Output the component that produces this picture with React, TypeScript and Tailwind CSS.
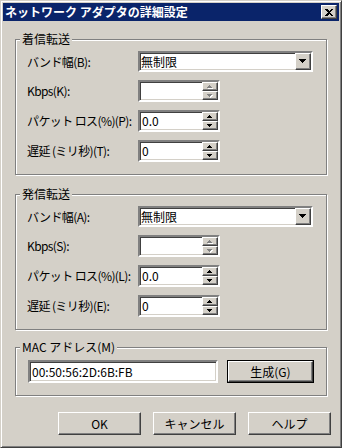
import React from 'react';

const sunken =
  'border-2 border-t-[#808080] border-l-[#808080] border-b-white border-r-white shadow-[inset_1px_1px_0_#404040,inset_-1px_-1px_0_#d4d0c8] bg-white';
const raised =
  'border border-t-white border-l-white border-b-[#404040] border-r-[#404040] shadow-[inset_-1px_-1px_0_#808080] bg-[#d4d0c8]';

const Arrow = ({ up, disabled, w = 5 }: { up?: boolean; disabled?: boolean; w?: number }) => {
  const h = Math.ceil(w / 2);
  const pts = up ? `0,${h} ${w},${h} ${w / 2},0` : `0,0 ${w},0 ${w / 2},${h}`;
  return (
    <svg width={w + 1} height={h + 1} viewBox={`0 0 ${w + 1} ${h + 1}`} shapeRendering="crispEdges">
      {disabled && <polygon points={pts} fill="#fff" transform="translate(1,1)" />}
      <polygon points={pts} fill={disabled ? '#808080' : '#000'} />
    </svg>
  );
};

const Spin = ({ value, disabled }: { value?: string; disabled?: boolean }) => (
  <div className={`${sunken} flex h-[22px] w-[82px]`}>
    <div className="flex-1 pl-[2px] leading-[18px]">{value}</div>
    <div className="flex w-[16px] flex-col">
      <div className={`${raised} flex h-[9px] items-center justify-center`}>
        <Arrow up disabled={disabled} />
      </div>
      <div className={`${raised} flex h-[9px] items-center justify-center`}>
        <Arrow disabled={disabled} />
      </div>
    </div>
  </div>
);

const Combo = ({ value }: { value: string }) => (
  <div className={`${sunken} flex h-[21px] w-[175px]`}>
    <div className="flex-1 pl-[1px] leading-[17px]">{value}</div>
    <div className={`${raised} flex w-[16px] items-center justify-center`}>
      <Arrow w={7} />
    </div>
  </div>
);

const Row = ({ label, children }: { label: string; children: React.ReactNode }) => (
  <div className="flex items-center">
    <div className="w-[111px] whitespace-nowrap tracking-[-0.6px]">{label}</div>
    {children}
  </div>
);

const Group = ({ title, className, children }: { title: string; className?: string; children: React.ReactNode }) => (
  <div className={`mx-[12px] flex flex-col border border-[#808080] shadow-[inset_1px_1px_0_#fff,1px_1px_0_#fff] ${className ?? ''}`}>
    <div className="-mt-[8px] ml-[4px] h-[14px] self-start bg-[#d4d0c8] px-[2px] leading-[14px]">{title}</div>
    {children}
  </div>
);

const Button = ({ label, def, className }: { label: string; def?: boolean; className?: string }) =>
  def ? (
    <div className={`border border-black ${className ?? ''}`}>
      <div className={`${raised} flex h-full items-center justify-center`}>{label}</div>
    </div>
  ) : (
    <div className={`${raised} flex items-center justify-center ${className ?? ''}`}>{label}</div>
  );

const Transfer = ({ title, keys, className }: { title: string; keys: string[]; className?: string }) => (
  <Group title={title} className={className}>
    <div className="mt-[5px] flex flex-col gap-[8px] pb-[12px] pl-[11px]">
      <Row label={`バンド幅(${keys[0]}):`}>
        <Combo value="無制限" />
      </Row>
      <Row label={`Kbps(${keys[1]}):`}>
        <Spin disabled />
      </Row>
      <Row label={`パケット ロス(%)(${keys[2]}):`}>
        <Spin value="0.0" />
      </Row>
      <Row label={`遅延 (ミリ秒)(${keys[3]}):`}>
        <Spin value="0" />
      </Row>
    </div>
  </Group>
);

export default function App() {
  return (
    <div className="h-[448px] w-[342px] border border-t-[#d4d0c8] border-l-[#d4d0c8] border-b-[#404040] border-r-[#404040] bg-[#d4d0c8] p-[2px] text-[12px] text-black shadow-[inset_1px_1px_0_#fff,inset_-1px_-1px_0_#808080] [font-family:'Noto_Sans_CJK_JP',sans-serif]">
      <div className="flex h-[18px] items-center justify-between bg-[#0a246a] pl-[2px] pr-[2px]">
        <span className="text-[12px] font-bold text-white">ネットワーク アダプタの詳細設定</span>
        <div className={`${raised} flex h-[14px] w-[16px] items-center justify-center`}>
          <svg width="8" height="7" viewBox="0 0 8 7" shapeRendering="crispEdges">
            <path d="M0 0h2l2 2 2-2h2L5 3.5 8 7H6L4 5 2 7H0l3-3.5z" fill="#000" />
          </svg>
        </div>
      </div>

      <Transfer title="着信転送" keys={['B', 'K', 'P', 'T']} className="mt-[18px]" />
      <Transfer title="発信転送" keys={['A', 'S', 'L', 'E']} className="mt-[19px]" />

      <Group title="MAC アドレス(M)" className="mt-[17px]">
        <div className="mt-[6px] flex items-center gap-[9px] pb-[12px] pl-[12px]">
          <div className={`${sunken} h-[23px] w-[190px] pl-[2px] leading-[19px]`}>00:50:56:2D:6B:FB</div>
          <Button label="生成(G)" def className="h-[23px] w-[87px]" />
        </div>
      </Group>

      <div className="mt-[16px] flex justify-end gap-[12px] pr-[8px]">
        <Button label="OK" className="h-[23px] w-[83px]" />
        <Button label="キャンセル" className="h-[23px] w-[83px]" />
        <Button label="ヘルプ" className="h-[23px] w-[83px]" />
      </div>
    </div>
  );
}
